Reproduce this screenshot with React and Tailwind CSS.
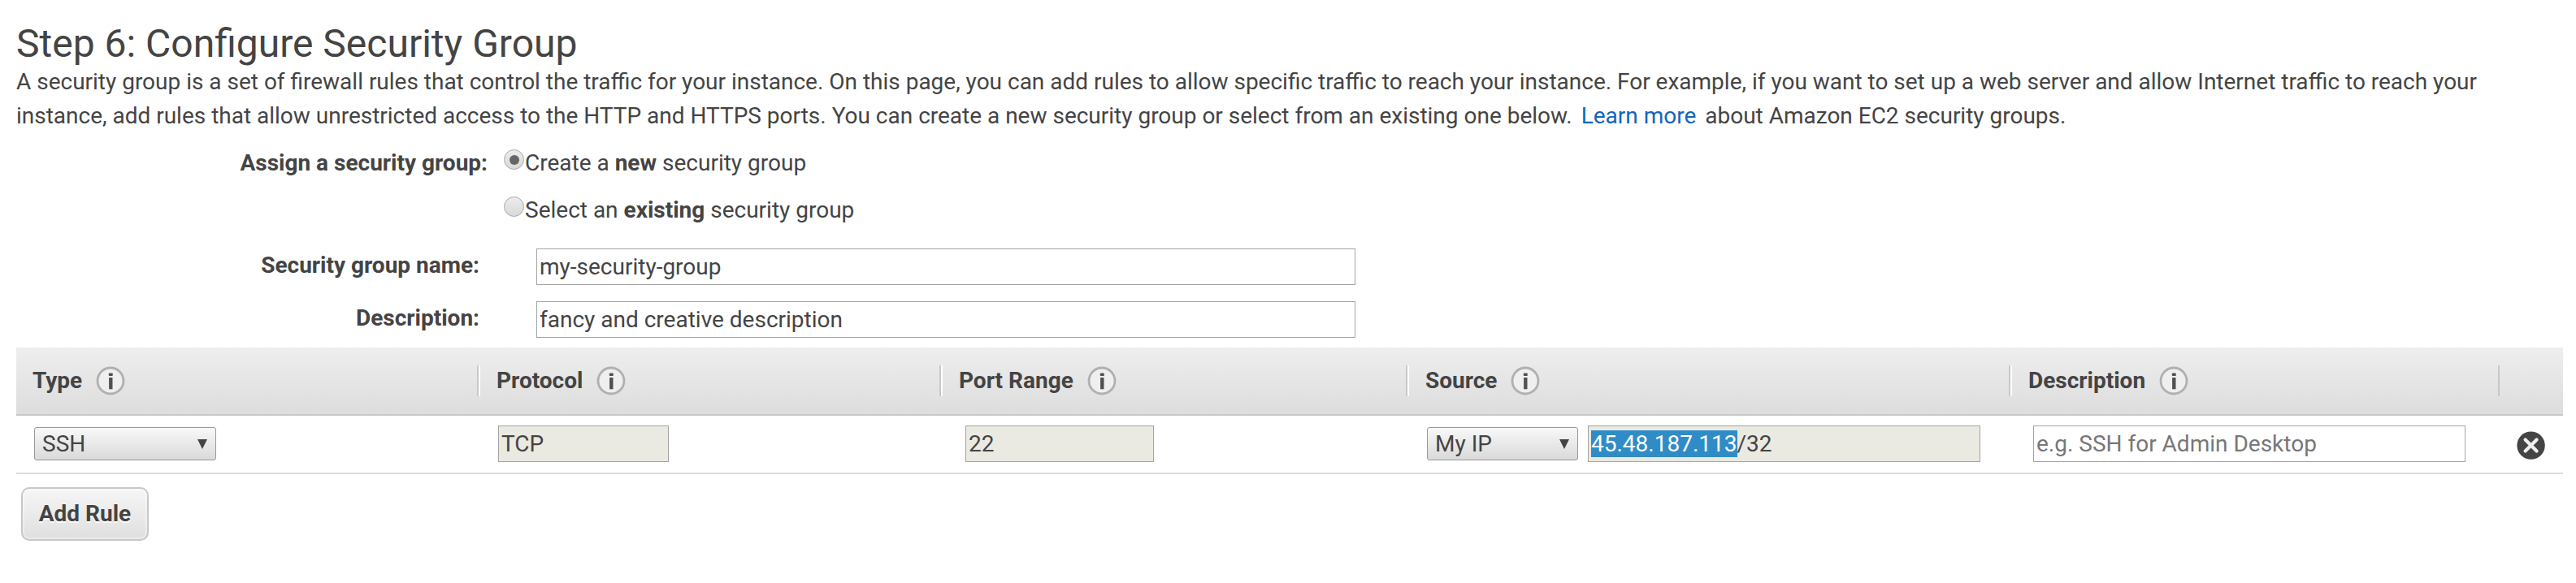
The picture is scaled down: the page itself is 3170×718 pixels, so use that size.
const InfoIcon = () => (
  <svg className="block size-9 shrink-0" viewBox="0 0 36 36">
    <circle cx="18" cy="18" r="16" fill="#efefef" stroke="#b0b0b0" strokeWidth="2.8" />
    <rect x="15.8" y="8.5" width="5" height="3.6" rx="1" fill="#505050" />
    <path d="M18.3 14v14.3" stroke="#505050" strokeWidth="4.4" />
  </svg>
);

const Radio = ({ checked }) => (
  <span className="mb-[9px] flex size-[25px] items-center justify-center rounded-full border border-[#aaa] bg-linear-to-b from-[#ececec] to-[#d9d9d9]">
    {checked && <span className="size-3 rounded-full bg-[#666]" />}
  </span>
);

const Select = ({ children, className }) => (
  <div className={`mt-[2px] flex h-[41px] items-center justify-between rounded-[3px] border border-[#989898] bg-linear-to-b from-[#f8f8f8] to-[#dadada] pr-[10px] pl-[9px] ${className}`}>
    <span>{children}</span>
    <svg className="h-3 w-3" viewBox="0 0 12 12"><path d="M0 0h12L6 12z" fill="#444" /></svg>
  </div>
);

const HeadCell = ({ children, className, last }) => (
  <div className={`flex items-center ${className}`}>
    <b className="mr-[17px] pb-px">{children}</b>
    <InfoIcon />
    {!last && <span className="ml-auto h-[38px] w-1 border-r-2 border-l-2 border-l-[#c8c8c8] border-r-white" />}
  </div>
);

const box = "flex h-[45px] items-center border border-[#a3a3a3] pl-[3px]";

export default function App() {
  return (
    <main className="h-[718px] w-[3170px] bg-white px-5 pt-[26px] font-['Roboto',sans-serif] text-[28px] leading-[42px] whitespace-nowrap text-[#444]">
      <h1 className="h-[52px] text-[48px] leading-[56px]">Step 6: Configure Security Group</h1>
      <p className="mt-[2px] text-[27.99px]">
        A security group is a set of firewall rules that control the traffic for your instance. On this page, you can add rules to allow specific traffic to reach your instance. For example, if you want to set up a web server and allow Internet traffic to reach your
        <br />
        instance, add rules that allow unrestricted access to the HTTP and HTTPS ports. You can create a new security group or select from an existing one below.
        <a className="mr-[11px] ml-[11px] text-[#1166bb]">Learn more</a>
        about Amazon EC2 security groups.
      </p>
      <div className="mt-[16px] flex h-[42px] items-center">
        <b className="w-[580px] text-right">Assign a security group:</b>
        <span className="ml-5 flex items-center gap-px"><Radio checked /><span>Create a <b>new</b> security group</span></span>
      </div>
      <div className="mt-4 flex h-[42px] items-center pl-[600px]">
        <span className="flex items-center gap-px"><Radio /><span>Select an <b>existing</b> security group</span></span>
      </div>
      <div className="mt-[26px] flex h-[45px] items-center">
        <b className="w-[570px] pb-[3px] text-right">Security group name:</b>
        <div className={`ml-[70px] w-[1008px] ${box}`}>my-security-group</div>
      </div>
      <div className="mt-5 flex h-[45px] items-center">
        <b className="w-[570px] pb-[3px] text-right">Description:</b>
        <div className={`ml-[70px] w-[1008px] ${box}`}>fancy and creative description</div>
      </div>
      <section className="mt-3 w-[3134px]">
        <div className="flex h-[84px] items-center border-b-2 border-[#c8c8c8] bg-linear-to-b from-[#eee] to-[#ddd] pl-5">
          <HeadCell className="w-[551px]">Type</HeadCell>
          <HeadCell className="w-[569px] pl-5">Protocol</HeadCell>
          <HeadCell className="w-[574px] pl-5">Port Range</HeadCell>
          <HeadCell className="w-[742px] pl-5">Source</HeadCell>
          <HeadCell last className="w-[598px] pl-5">Description</HeadCell>
          <span className="h-[38px] w-[2px] bg-[#c8c8c8]" />
        </div>
        <div className="flex h-[72px] items-start border-b-2 border-[#ddd] pt-3 pl-[22px]">
          <Select className="w-[224px]">SSH</Select>
          <div className={`ml-[347px] w-[210px] bg-[#eaeae2] ${box}`}>TCP</div>
          <div className={`ml-[365px] w-[232px] bg-[#eaeae2] ${box}`}>22</div>
          <Select className="ml-[336px] w-[186px]">My IP</Select>
          <div className={`ml-3 w-[483px] bg-[#eaeae2] ${box}`}>
            <span className="h-[33px] bg-[#308cc6] leading-[33px] text-white">45.48.187.113</span>
            <span>/32</span>
          </div>
          <div className={`ml-[65px] w-[532px] text-[#777] ${box}`}>e.g. SSH for Admin Desktop</div>
          <svg className="mt-[7px] ml-[63px] size-9" viewBox="0 0 36 36">
            <circle cx="17.6" cy="17.6" r="17.2" fill="#444" />
            <path d="M10.6 10.6l14 14M24.6 10.6L10.6 24.6" stroke="#eee" strokeWidth="4.2" strokeLinecap="round" />
          </svg>
        </div>
      </section>
      <button className="mt-4 ml-[6px] flex h-[66px] w-[157px] items-center justify-center rounded-[10px] border-2 border-[#c8c8c8] bg-linear-to-b from-[#f6f6f6] to-[#dfdfdf] pb-px font-bold shadow-[inset_0_0_0_2px_rgba(255,255,255,0.35)] [text-shadow:0_2px_0_white]">
        Add Rule
      </button>
    </main>
  );
}
